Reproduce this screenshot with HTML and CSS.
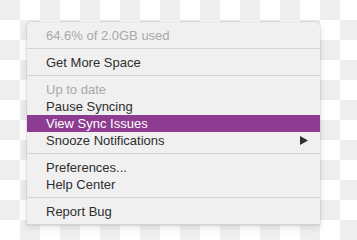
FILE: index.html
```
<!DOCTYPE html>
<html lang="en">
<head>
    <meta charset="UTF-8">
    <meta name="viewport" content="width=device-width, initial-scale=1.0">
    <title>Sync Menu</title>
    <link rel="stylesheet" href="styles.css">
</head>
<body>

<div class="menu">
    <!-- Storage usage -->
    <div class="menu-item disabled">64.6% of 2.0GB used</div>
    <div class="separator"></div>
    <div class="menu-item">Get More Space</div>
    <div class="separator"></div>
    <!-- Sync status -->
    <div class="menu-item disabled">Up to date</div>
    <div class="menu-item">Pause Syncing</div>
    <div class="menu-item active">View Sync Issues</div>
    <div class="menu-item has-sub">
        <span>Snooze Notifications</span>
        <svg class="sub-arrow" width="8" height="9" viewBox="0 0 8 9"><path d="M0 0 L8 4.5 L0 9 Z" fill="#2e2e2e"/></svg>
    </div>
    <div class="separator"></div>
    <div class="menu-item">Preferences...</div>
    <div class="menu-item">Help Center</div>
    <div class="separator"></div>
    <div class="menu-item">Report Bug</div>
    <div class="separator"></div>
</div>

</body>
</html>
```
FILE: styles.css
```
/* Transparent-look checkerboard behind the menu */
body {
    margin: 0;
    width: 357px;
    height: 240px;
    overflow: hidden;
    font-family: "Liberation Sans", Arial, sans-serif;
    background-color: #ffffff;
    background-image:
        linear-gradient(45deg, #efefef 25%, transparent 25%, transparent 75%, #efefef 75%),
        linear-gradient(45deg, #efefef 25%, transparent 25%, transparent 75%, #efefef 75%);
    background-size: 40px 40px;
    background-position: 20px 0, 0 20px;
}
/* Menu panel */
.menu {
    margin: 22px 0 0 27px;
    width: 293px;
    padding-top: 5px;
    background-color: #f0f0f0;
    border-radius: 5px 5px 0 0;
    box-shadow: 0 0 0 1px rgba(0, 0, 0, 0.06), 0 2px 8px rgba(0, 0, 0, 0.12);
}
.menu-item {
    height: 17px;
    line-height: 17px;
    padding-left: 19px;
    padding-right: 10px;
    font-size: 13px;
    color: #2e2e2e;
    display: flex;
    align-items: center;
    justify-content: space-between;
}
.menu-item.disabled {
    color: #a9a9a9;
}
.menu-item.active {
    background-color: #8e3b92;
    color: #ffffff;
}
.sub-arrow {
    margin-right: 2px;
}
/* Separator line */
.separator {
    height: 1px;
    margin: 4px 0 5px;
    background-color: #d5d5d5;
}
```
